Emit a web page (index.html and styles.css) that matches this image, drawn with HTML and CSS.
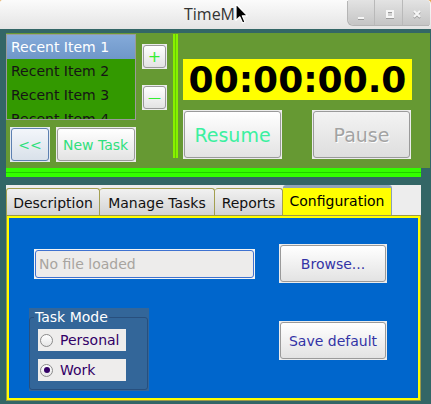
FILE: index.html
```html
<!DOCTYPE html>
<html>
<head>
<meta charset="utf-8">
<title>TimeM</title>
<link rel="stylesheet" href="styles.css">
</head>
<body>
<div class="titlewrap">
  <header class="titlebar">
    <span class="title">TimeM</span>
    <div class="wm-buttons">
      <span class="wm-btn">
        <svg width="26" height="25" viewBox="0 0 26 25"><rect x="10" y="18" width="6" height="2" fill="#9a9a9a"/><rect x="10" y="17" width="6" height="2" fill="#f6f6f6"/></svg>
      </span>
      <span class="wm-btn">
        <svg width="27" height="25" viewBox="0 0 27 25"><rect x="12" y="12" width="6" height="6" fill="none" stroke="#9a9a9a" stroke-width="2"/><rect x="12" y="11" width="6" height="6" fill="none" stroke="#f6f6f6" stroke-width="2"/></svg>
      </span>
      <span class="wm-btn">
        <svg width="27" height="25" viewBox="0 0 27 25"><path d="M11 12 L17 18 M17 12 L11 18" stroke="#9a9a9a" stroke-width="2"/><path d="M11 11 L17 17 M17 11 L11 17" stroke="#f6f6f6" stroke-width="2"/></svg>
      </span>
    </div>
    <svg class="cursor" width="14" height="21" viewBox="0 0 14 21"><path d="M1 1 V17.5 L4.8 13.8 L7.6 20 L10 19 L7.3 12.8 H12.5 Z" fill="#000" stroke="#fff" stroke-width="1.2" stroke-linejoin="round"/></svg>
  </header>
</div>
<div class="body">
  <section class="top">
    <div class="left">
      <div class="left-top">
        <ul class="recent">
          <li class="sel">Recent Item 1</li>
          <li>Recent Item 2</li>
          <li>Recent Item 3</li>
          <li>Recent Item 4</li>
        </ul>
        <div class="pm">
          <div class="btn small"><span class="face green">+</span></div>
          <div class="btn small"><span class="face green minus">—</span></div>
        </div>
      </div>
      <div class="left-bottom">
        <div class="btn back"><span class="face mint">&lt;&lt;</span></div>
        <div class="btn newtask"><span class="face mint"><span class="clip">New Task</span></span></div>
      </div>
    </div>
    <div class="vsep"></div>
    <div class="right">
      <div class="timer">00:00:00.0</div>
      <div class="ctrl">
        <div class="btn big"><span class="face resume">Resume</span></div>
        <div class="btn big"><span class="face pause">Pause</span></div>
      </div>
    </div>
  </section>
  <div class="hsep"></div>
  <section class="tabs">
    <nav class="tabbar">
      <span class="tab w1">Description</span>
      <span class="tab w2">Manage Tasks</span>
      <span class="tab w3">Reports</span>
      <span class="tab active">Configuration</span>
    </nav>
    <div class="panel">
      <div class="field"><span class="field-in">No file loaded</span></div>
      <div class="btn wide"><span class="face navy">Browse...</span></div>
      <div class="group">
        <fieldset class="mode">
          <legend>Task Mode</legend>
          <div class="radio"><span class="dot"></span><span>Personal</span></div>
          <div class="radio"><span class="dot on"></span><span>Work</span></div>
        </fieldset>
      </div>
      <div class="btn wide save"><span class="face navy">Save default</span></div>
    </div>
  </section>
</div>
</body>
</html>
```
FILE: styles.css
```css
html, body {
  margin: 0;
  padding: 0;
}
body {
  width: 431px;
  height: 404px;
  overflow: hidden;
  background: #336666;
  font-family: "DejaVu Sans", sans-serif;
  font-size: 14px;
}

/* title bar */
.titlewrap {
  background: #e2a34c;
}
.titlebar {
  position: relative;
  height: 29px;
  display: flex;
  background: linear-gradient(#fbfbfb, #e4e4e4);
  border-top-right-radius: 4px;
  border-top-left-radius: 2px;
}
.title {
  flex: 1;
  text-align: center;
  padding-left: 71px;
  font-family: "Open Sans", sans-serif;
  font-size: 16px;
  line-height: 29px;
  color: #333333;
}
.wm-buttons {
  display: flex;
  height: 25px;
  margin-right: 1px;
  border-bottom-left-radius: 6px;
  border-top-right-radius: 4px;
  overflow: hidden;
  background: linear-gradient(#e3e3e3, #c5c5c5);
  box-shadow: -1px 1px 0 #b5b5b5;
}
.wm-btn {
  display: block;
  height: 25px;
}
.wm-btn + .wm-btn {
  border-left: 1px solid #b9b9b9;
}
.wm-btn svg {
  display: block;
}
.cursor {
  position: absolute;
  left: 235px;
  top: 3px;
}

/* body */
.body {
  padding: 4px 0 0 6px;
}
.top {
  width: 424px;
  height: 135px;
  background: #669933;
  display: flex;
}
.left {
  width: 167px;
  padding-top: 1px;
  display: flex;
  flex-direction: column;
}
.left-top {
  display: flex;
  gap: 6px;
}
.recent {
  list-style: none;
  margin: 0;
  padding: 0;
  width: 128px;
  height: 84px;
  border: 1px solid #9a9a9a;
  background: #339900;
  overflow: hidden;
}
.recent li {
  height: 24px;
  line-height: 24px;
  padding-left: 4px;
  color: #151515;
  white-space: nowrap;
}
.recent li.sel {
  background: linear-gradient(#84aad9, #6f97c9);
  color: #ffffff;
}
.pm {
  display: flex;
  flex-direction: column;
  gap: 16px;
  padding-top: 10px;
}

/* buttons */
.btn {
  box-sizing: border-box;
  padding: 1px;
  background: #ececec;
}
.face {
  box-sizing: border-box;
  height: 100%;
  display: flex;
  align-items: center;
  justify-content: center;
  border: 1px solid #9a9a9a;
  border-radius: 3px;
  background: linear-gradient(#ffffff, #e3e3e3);
  white-space: nowrap;
  overflow: hidden;
}
.small {
  width: 25px;
  height: 25px;
}
.green {
  color: #33ee33;
  font-size: 16px;
}
.minus {
  font-size: 13px;
}
.left-bottom {
  display: flex;
  gap: 6px;
  margin-top: 7px;
  padding-left: 4px;
}
.back {
  width: 40px;
  height: 35px;
  background: #e3e9f0;
}
.back .face {
  border-color: #5d80b1;
  background: linear-gradient(#f3f6fa, #d9e1ea);
}
.newtask {
  width: 80px;
  height: 35px;
}
.mint {
  color: #2fe07c;
}
.clip {
  display: block;
  width: 67px;
  overflow: hidden;
  margin-left: 1px;
}
.vsep {
  box-sizing: border-box;
  width: 5px;
  height: 124px;
  margin-top: 1px;
  background: #66cc00;
  border-left: 2px solid #88f000;
  border-right: 2px solid #88f000;
}
.right {
  padding: 26px 0 0 5px;
}
.timer {
  box-sizing: border-box;
  width: 229px;
  height: 41px;
  padding-top: 1px;
  background: #ffff00;
  color: #000000;
  font-weight: bold;
  font-size: 36px;
  line-height: 40px;
  text-align: center;
}
.ctrl {
  display: flex;
  gap: 30px;
  margin-top: 10px;
}
.big {
  width: 99px;
  height: 49px;
}
.resume {
  color: #3cf0a0;
  font-size: 19px;
}
.pause {
  color: #a3a3a3;
  font-size: 19px;
  background: linear-gradient(#f3f3f3, #dedede);
  text-shadow: 1px 1px 0 #ffffff;
}
.hsep {
  box-sizing: border-box;
  width: 415px;
  height: 9px;
  background: #22cc00;
  border-top: 4px solid #33ff00;
  border-bottom: 4px solid #33ff00;
}

/* tabs */
.tabs {
  margin-top: 8px;
  width: 415px;
  height: 216px;
  background: #ededed;
  display: flex;
  flex-direction: column;
}
.tabbar {
  height: 30px;
  display: flex;
  align-items: flex-end;
}
.tab {
  box-sizing: border-box;
  height: 27px;
  padding-top: 2px;
  line-height: 24px;
  text-align: center;
  color: #111111;
  border: 1px solid #a39f4f;
  border-bottom: 0;
  border-radius: 3px 3px 0 0;
  background: linear-gradient(#f1f1f1, #d3d3d3);
  white-space: nowrap;
}
.tab + .tab {
  border-left: 0;
}
.w1 { width: 94px; }
.w2 { width: 115px; }
.w3 { width: 68px; }
.tab.active {
  width: 109px;
  height: 30px;
  padding-top: 0;
  line-height: 27px;
  background: #ffff00;
  color: #000000;
  border-top: 3px solid #8fa3b7;
  border-right-color: #8aa0b5;
}
.panel {
  flex: 1;
  box-sizing: border-box;
  border: 1px solid #9c9a48;
  box-shadow: inset 0 0 0 2px #ffff00;
  background: #0066cc;
  display: grid;
  grid-template-columns: 250px 108px;
  grid-template-rows: 39px auto;
  row-gap: 25px;
  align-content: start;
  padding: 28px 0 0 22px;
}
.field {
  box-sizing: border-box;
  align-self: center;
  margin-left: 5px;
  width: 221px;
  height: 30px;
  padding: 1px;
  background: #f4f4f4;
}
.field-in {
  box-sizing: border-box;
  display: block;
  height: 100%;
  border: 1px solid #3f72d0;
  border-radius: 3px;
  background: #edeceb;
  color: #a8a49f;
  line-height: 26px;
  padding-left: 3px;
}
.wide {
  width: 108px;
  height: 39px;
}
.navy {
  color: #3333a6;
}
.save {
  margin-top: 13px;
}
.group {
  box-sizing: border-box;
  width: 120px;
  height: 83px;
  padding: 1px 1px 1px 0;
  background: #336699;
}
.mode {
  margin: 0;
  height: 100%;
  box-sizing: border-box;
  border: 1px solid #284f7d;
  border-radius: 3px;
  padding: 3px 8px 0 4px;
  min-width: 0;
}
.mode legend {
  padding: 0 1px;
  color: #ffffff;
  line-height: 17px;
}
.radio {
  display: flex;
  align-items: center;
  gap: 7px;
  width: 88px;
  height: 22px;
  margin-left: 4px;
  margin-bottom: 8px;
  padding-left: 2px;
  box-sizing: border-box;
  background: #eeedec;
  color: #330066;
}
.dot {
  box-sizing: border-box;
  width: 13px;
  height: 13px;
  border: 1px solid #8a8a8a;
  border-radius: 50%;
  background: linear-gradient(#ffffff, #e6e6e6);
  display: flex;
  align-items: center;
  justify-content: center;
}
.dot.on::after {
  content: "";
  width: 6px;
  height: 6px;
  border-radius: 50%;
  background: #330066;
}
```
